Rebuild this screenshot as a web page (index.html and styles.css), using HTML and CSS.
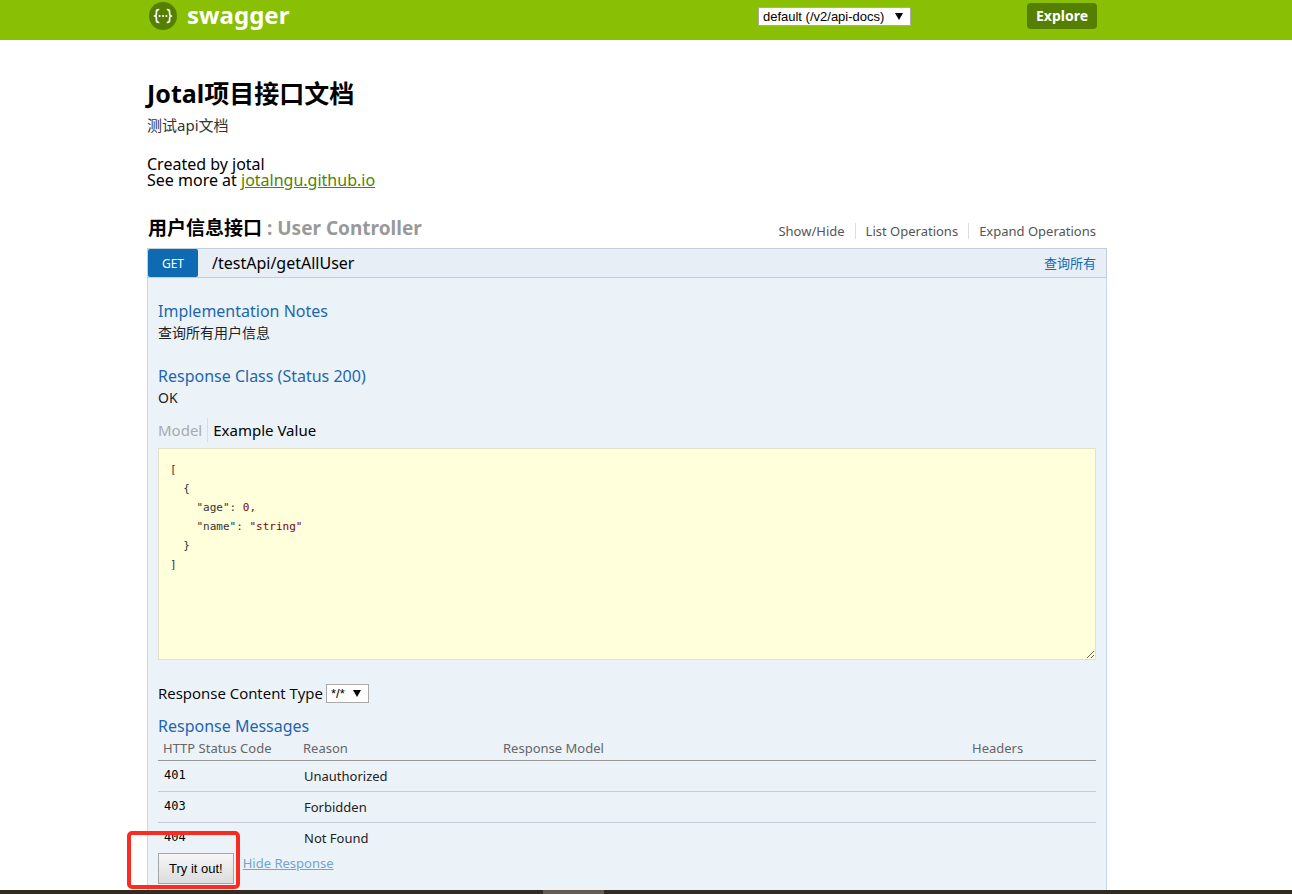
FILE: index.html
```html
<!DOCTYPE html>
<html lang="zh-CN">
<head>
<meta charset="utf-8">
<title>Swagger UI</title>
<link rel="stylesheet" href="styles.css">
</head>
<body>
<header class="topbar">
  <div class="wrap topbar-inner">
    <a class="brand" href="#">
      <svg class="logo" viewBox="0 0 28 28" aria-hidden="true">
        <circle cx="14" cy="14" r="14" fill="#547f00"/>
        <g fill="none" stroke="#fff" stroke-width="1.7" stroke-linecap="round" stroke-linejoin="round">
          <path d="M9.5 7.6C7.4 7.6 7.4 8.5 7.4 10v1.8c0 1.4-.5 2.2-1.9 2.2 1.4 0 1.9.8 1.9 2.2V18c0 1.5 0 2.4 2.1 2.4"/>
          <path d="M18.5 7.6c2.1 0 2.1.9 2.1 2.4v1.8c0 1.4.5 2.2 1.9 2.2-1.4 0-1.9.8-1.9 2.2V18c0 1.5 0 2.4-2.1 2.4"/>
        </g>
        <g fill="#fff"><circle cx="10.6" cy="14" r="1.1"/><circle cx="14" cy="14" r="1.1"/><circle cx="17.4" cy="14" r="1.1"/></g>
      </svg>
      <span>swagger</span>
    </a>
    <form class="selector">
      <span class="select select-api">
        <select aria-label="API"><option>default (/v2/api-docs)</option></select>
      </span>
      <button class="explore" type="button">Explore</button>
    </form>
  </div>
</header>
<main class="main">
  <div class="wrap">
    <section class="info">
      <h1>Jotal项目接口文档</h1>
      <p class="desc">测试api文档</p>
      <p class="meta">Created by jotal</p>
      <p class="meta">See more at <a href="#">jotalngu.github.io</a></p>
    </section>
    <section>
      <div class="resource-head">
        <h2>用户信息接口 <span>: User Controller</span></h2>
        <ul class="options">
          <li><a href="#">Show/Hide</a></li>
          <li><a href="#">List Operations</a></li>
          <li><a href="#">Expand Operations</a></li>
        </ul>
      </div>
      <div class="op-head">
        <a class="method" href="#">GET</a>
        <a class="path" href="#">/testApi/getAllUser</a>
        <a class="summary" href="#">查询所有</a>
      </div>
      <div class="op-body">
        <h3>Implementation Notes</h3>
        <p class="text notes">查询所有用户信息</p>
        <h3>Response Class (Status 200)</h3>
        <p class="text">OK</p>
        <ul class="tabs">
          <li><a href="#">Model</a></li>
          <li><a class="selected" href="#">Example Value</a></li>
        </ul>
        <pre class="snippet">[
  {
    "age": <b>0</b>,
    "name": <b>"string"</b>
  }
]</pre>
        <div class="content-type">
          <label for="ctype">Response Content Type</label>
          <span class="select select-type">
            <select id="ctype"><option>*/*</option></select>
          </span>
        </div>
        <h3>Response Messages</h3>
        <table class="messages">
          <thead>
            <tr><th class="c-code">HTTP Status Code</th><th class="c-reason">Reason</th><th class="c-model">Response Model</th><th>Headers</th></tr>
          </thead>
          <tbody>
            <tr><td class="code">401</td><td>Unauthorized</td><td></td><td></td></tr>
            <tr><td class="code">403</td><td>Forbidden</td><td></td><td></td></tr>
            <tr><td class="code">404</td><td>Not Found</td><td></td><td></td></tr>
          </tbody>
        </table>
        <div class="submit-row">
          <button class="submit" type="button">Try it out!</button>
          <a href="#">Hide Response</a>
          <div class="highlight"></div>
        </div>
      </div>
    </section>
  </div>
</main>
<footer class="taskbar"><div class="task"></div></footer>
</body>
</html>
```
FILE: styles.css
```css
* { box-sizing: border-box; }
body {
  margin: 0;
  height: 100vh;
  display: flex;
  flex-direction: column;
  overflow: hidden;
  background: #fff;
  color: #000;
  font-family: "Noto Sans", "Noto Sans CJK SC", sans-serif;
  font-size: 16px;
}
h1, h2, h3, p, ul, pre { margin: 0; padding: 0; }
ul { display: flex; list-style: none; }
a { color: inherit; text-decoration: none; }

.wrap {
  width: calc(100% - 332px);
  margin-left: 147px;
}

.topbar { flex: none; background: #89bf04; height: 40px; }
.topbar-inner { display: flex; justify-content: space-between; }
.brand {
  display: flex;
  align-items: center;
  gap: 10px;
  height: 32px;
  padding-left: 2px;
  color: #fff;
  font-size: 24px;
  font-weight: 700;
  line-height: 30px;
}
.brand span { padding-bottom: 2px; }
.logo { width: 28px; height: 28px; }
.selector {
  display: flex;
  align-items: center;
  gap: 116px;
  height: 32px;
  padding-right: 10px;
}
.select { position: relative; display: inline-block; }
.select::after {
  content: "";
  position: absolute;
  right: 8px;
  top: 6px;
  border: 4px solid transparent;
  border-top: 7px solid #000;
  border-bottom: 0;
  pointer-events: none;
}
.select select {
  display: block;
  appearance: none;
  width: 100%;
  height: 19px;
  margin: 0;
  padding: 0 4px;
  border: 1px solid #a9a9a9;
  border-radius: 0;
  background: #fff;
  color: #000;
  font: 13px/17px "Liberation Sans", Arial, sans-serif;
}
.select-api { width: 153px; }
.select-type { width: 43px; }
.explore {
  height: 26px;
  padding: 0 9px;
  border: 0;
  border-radius: 4px;
  background: #547f00;
  color: #fff;
  font: 700 14px/26px "Noto Sans", sans-serif;
}

.main { flex: 1; min-height: 0; overflow: hidden; }
.info { padding-top: 35px; }
h1 { font-size: 25px; line-height: 36px; }
.desc { margin: 4px 0 21px; font-size: 15px; line-height: 20px; color: #333; }
.meta { line-height: 16px; }
.meta a { color: #547f00; text-decoration: underline; }

.resource-head {
  display: flex;
  justify-content: space-between;
  align-items: center;
  margin-top: 22px;
  padding-bottom: 2px;
  height: 38px;
}
h2 { padding-left: 1px; font-size: 19px; line-height: 28px; }
h2 span { color: #999; }
.options { padding: 6px 11px 0 0; font-size: 13px; line-height: 16px; color: #555; }
.options li + li { margin-left: 10px; padding-left: 10px; border-left: 1px solid #ddd; }

.op-head {
  display: flex;
  align-items: center;
  height: 30px;
  border: 1px solid #c3d0dc;
  background: #e7eef5;
}
.method {
  width: 50px;
  padding-top: 2px;
  border-radius: 2px;
  background: #0f6ab4;
  color: #fff;
  font-size: 12px;
  line-height: 26px;
  text-align: center;
}
.path { padding-left: 14px; }
.summary { margin-left: auto; padding: 0 10px 2px 0; color: #0f6ab4; font-size: 13px; }

.op-body {
  padding: 22px 10px 20px;
  border: 1px solid #c3d9ec;
  border-top: 0;
  background: #ebf3f9;
}
h3 { font-size: 16px; font-weight: 400; line-height: 22px; color: #1f66ae; }
.text { font-size: 14px; line-height: 21px; color: #222; }
.notes { margin-bottom: 22px; }
.tabs { margin: 10px 0 6px; font-size: 15px; line-height: 24px; }
.tabs li + li { margin-left: 5px; padding-left: 5px; border-left: 1px solid #ddd; }
.tabs a { color: #aaa; }
.tabs a.selected { color: #000; }
.snippet {
  height: 212px;
  padding: 11px;
  border: 1px solid #e5e0c6;
  background: #ffffdc;
  color: #333;
  font: 11px/19px "DejaVu Sans Mono", monospace;
  overflow: auto;
  resize: vertical;
}
.snippet b { font-weight: 400; color: #800000; }
.content-type {
  display: flex;
  align-items: center;
  gap: 3px;
  margin: 22px 0 11px;
  font-family: "Open Sans", sans-serif;
  font-size: 15px;
  line-height: 22px;
}

.messages { width: 100%; border-collapse: collapse; table-layout: fixed; font-size: 13px; }
.messages th {
  height: 23px;
  padding: 0 5px;
  border-bottom: 1px solid #999;
  color: #666;
  font-weight: 400;
  line-height: 20px;
  text-align: left;
}
.messages .c-code { width: 140px; }
.messages .c-reason { width: 200px; }
.messages .c-model { width: 50%; }
.messages td { height: 31px; padding: 0 6px; color: #222; line-height: 20px; }
.messages tr + tr td { border-top: 1px solid #c5ccd6; }
.messages td.code { padding-bottom: 2px; font: 12px/20px "DejaVu Sans Mono", monospace; color: #000; }

.submit-row { position: relative; display: flex; gap: 9px; }
.submit {
  height: 31px;
  padding: 0 10px;
  border: 1px solid #a6a6a6;
  border-radius: 0;
  background: linear-gradient(#f6f6f6, #dcdcdc);
  color: #000;
  font: 13px "Liberation Sans", Arial, sans-serif;
}
.submit-row a { color: #6fa5d2; font-size: 13px; line-height: 20px; text-decoration: underline; }
.highlight {
  position: absolute;
  left: -31px;
  top: -22px;
  width: 113px;
  height: 58px;
  border: 4px solid #fb2b22;
  border-radius: 5px;
  pointer-events: none;
}

.taskbar { position: relative; flex: none; height: 4px; padding-left: 42%; background: #322b1f; }
.task { width: 61px; height: 4px; background: #645c52; }
```
